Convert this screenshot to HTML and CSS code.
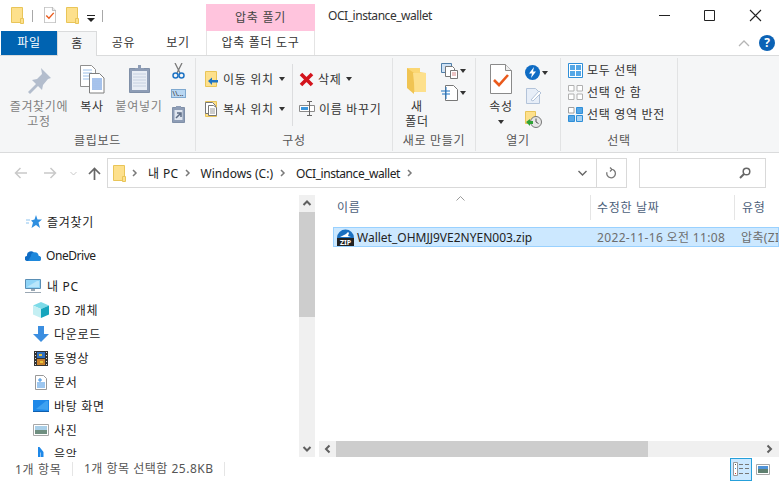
FILE: index.html

```html
<!DOCTYPE html>
<html lang="ko">
<head>
    <meta charset="UTF-8">
    <title>OCI_instance_wallet</title>
    <link rel="stylesheet" href="styles.css">
</head>
<body>
    <svg class="defs" width="0" height="0">
        <symbol id="qfolder" viewBox="0 0 13 17">
            <path d="M.5.5h11v15H.5z" fill="#fde08c" stroke="#e9c558"/>
            <path d="M9.5 11.5h3v5h-3z" fill="#fde08c" stroke="#e9c558"/>
        </symbol>
        <symbol id="check-doc" viewBox="0 0 22 30">
            <path d="M.5.5h15l6 6v23H.5z" fill="#fff" stroke="#8a8a8a"/>
            <path d="M15.500.5v6h6" fill="#eee" stroke="#8a8a8a"/>
            <path d="M4 16l5 5 9-10" fill="none" stroke="#ea5a1c" stroke-width="2.600"/>
        </symbol>
        <symbol id="chev" viewBox="0 0 6 8">
            <path d="M1 1l3 3-3 3" fill="none" stroke="#7a7a7a" stroke-width="1.500"/>
        </symbol>
    </svg>

    <div class="titlebar">
        <div class="qat">
            <svg class="qat-folder" width="13" height="17"><use href="#qfolder"/></svg>
            <span class="qat-sep"></span>
            <svg class="qat-doc" width="12" height="16"><use href="#check-doc"/></svg>
            <svg class="qat-folder2" width="13" height="17"><use href="#qfolder"/></svg>
            <svg class="qat-drop" width="8" height="7" viewBox="0 0 8 7"><path d="M0 0h8v1H0zM0 3h8L4 7z" fill="#222"/></svg>
            <span class="qat-sep qat-sep2"></span>
        </div>
        <div class="context-head">압축 풀기</div>
        <div class="wintitle">OCI_instance_wallet</div>
        <div class="winbtns">
            <svg class="win-min" width="46" height="31" viewBox="0 0 46 31"><path d="M18 15.500h11" stroke="#222"/></svg>
            <svg width="46" height="31" viewBox="0 0 46 31"><path d="M18.500 10.500h10v10h-10z" fill="none" stroke="#222"/></svg>
            <svg width="46" height="31" viewBox="0 0 46 31"><path d="M18 10l11 11M29 10L18 21" stroke="#222" stroke-width="1.100"/></svg>
        </div>
    </div>

    <div class="tabs">
        <div class="tab tab-file">파일</div>
        <div class="tab tab-home">홈</div>
        <div class="tab tab-share">공유</div>
        <div class="tab tab-view">보기</div>
        <div class="tab tab-context">압축 폴더 도구</div>
        <div class="tabs-right">
            <svg width="12" height="7" viewBox="0 0 12 7"><path d="M1 6l5-5 5 5" fill="none" stroke="#b5b5b5" stroke-width="1.300"/></svg>
            <span class="help">?</span>
        </div>
    </div>

    <div class="ribbon">
        <div class="group g1">
            <div class="group-body">
                <div class="big big-pin disabled">
                    <div class="big-icon">
                        <svg width="24" height="30" viewBox="0 0 24 30"><path d="M14 4l10 10-3 1-5 6-1 5-4-4-8 8-2-2 8-8-4-4 5-1 5-5z" fill="#b3bdcd"/></svg>
                    </div>
                    <span>즐겨찾기에<br>고정</span>
                </div>
                <div class="big big-copy">
                    <div class="big-icon">
                        <svg width="25" height="30" viewBox="0 0 25 30">
                            <path d="M.5 1.500h11l4 4v17H.5z" fill="#fff" stroke="#8f8f8f"/>
                            <path d="M3 6h9M3 9h9M3 12h9M3 15h9" stroke="#9cc0ea"/>
                            <path d="M9.500 9.500h10l4.500 4.500v15H9.500z" fill="#fff" stroke="#7f7f7f"/>
                            <path d="M12 15h10M12 17h10M12 19h10M12 21h10M12 23h10M12 25h10" stroke="#4e86d8"/>
                        </svg>
                    </div>
                    <span>복사</span>
                </div>
                <div class="big big-paste disabled">
                    <div class="big-icon">
                        <svg width="21" height="30" viewBox="0 0 21 30">
                            <path d="M.5 4.500h20v24H.5z" fill="#8e9db6" stroke="#8090a8"/>
                            <path d="M3 7h15v19H3z" fill="#e8edf5"/>
                            <path d="M4 10h13M4 13h13M4 16h13M4 19h13M4 22h13" stroke="#c6d0e0"/>
                            <path d="M6 4h9v3H6zM9 1h3v3H9z" fill="#8e9db6"/>
                        </svg>
                    </div>
                    <span>붙여넣기</span>
                </div>
                <div class="small-col">
                    <svg width="13" height="16" viewBox="0 0 13 16">
                        <path d="M3 0l5 10M10 0L5 10" stroke="#7a7a7a" stroke-width="1.300"/>
                        <circle cx="3.500" cy="12.500" r="2.500" fill="none" stroke="#1f74c4" stroke-width="1.500"/>
                        <circle cx="9.500" cy="12.500" r="2.500" fill="none" stroke="#1f74c4" stroke-width="1.500"/>
                    </svg>
                    <span class="pathcopy">\\...</span>
                    <svg class="disabled-ic" width="13" height="17" viewBox="0 0 13 17">
                        <path d="M.5 1.500h12v15H.5z" fill="#8e9db6" stroke="#8090a8"/>
                        <path d="M2.500 4h8v10h-8z" fill="#dfe5ef"/>
                        <path d="M4 12l4-4M5 7h4v4" fill="none" stroke="#5d6c85" stroke-width="1.500"/>
                        <path d="M4 0h5v3H4z" fill="#8e9db6"/>
                    </svg>
                </div>
            </div>
            <div class="group-label">클립보드</div>
        </div>

        <div class="group g2">
            <div class="group-body">
                <div class="organize-col">
                    <div class="org-row">
                        <svg class="ic-folder" width="13" height="16" viewBox="0 0 13 16">
                            <path d="M.5.500h11v15H.5z" fill="#fde08c" stroke="#e9c558"/>
                            <path d="M3 10l4-3.500V9h6v2.500H7V14z" fill="#1f74c4"/>
                        </svg>
                        <span>이동 위치</span><i class="caret"></i>
                    </div>
                    <div class="org-row">
                        <svg class="ic-folder" width="13" height="16" viewBox="0 0 13 16">
                            <path d="M.5.500h11v15H.5z" fill="#fde08c" stroke="#e9c558"/>
                            <path d="M.5 1.500h7l3 3v8H.5z" fill="#fff" stroke="#777"/>
                            <path d="M3.500 4.500h5l3 2v8h-8z" fill="#fff" stroke="#777"/>
                            <path d="M5 8h5M5 10h5M5 12h5" stroke="#9a9a9a"/>
                        </svg>
                        <span>복사 위치</span><i class="caret"></i>
                    </div>
                </div>
                <div class="organize-col org-right">
                    <div class="org-row">
                        <svg class="ic-del" width="15" height="15" viewBox="0 0 15 15"><path d="M2 2l11 11M13 2L2 13" stroke="#d3141c" stroke-width="3.600"/></svg>
                        <span>삭제</span><i class="caret"></i>
                    </div>
                    <div class="org-row">
                        <svg class="ic-ren" width="16" height="16" viewBox="0 0 16 16">
                            <path d="M.5 4.500h15v6H.5z" fill="#fff" stroke="#8a8a8a"/>
                            <path d="M2 6h7v3H2z" fill="#3a96dd"/>
                            <path d="M10.500 0v15M8 .500h5M8 14.500h5" stroke="#666"/>
                        </svg>
                        <span>이름 바꾸기</span>
                    </div>
                </div>
            </div>
            <div class="group-label">구성</div>
        </div>

        <div class="group g3">
            <div class="group-body">
                <div class="big big-new">
                    <div class="big-icon">
                        <svg width="20" height="30" viewBox="0 0 20 30">
                            <path d="M0 4h13v4l6 1v19H7z" fill="#fbd774"/>
                            <path d="M0 4l7 5v21L0 24z" fill="#f0c453"/>
                            <path d="M6 9h13v19H8z" fill="#fde08c"/>
                        </svg>
                    </div>
                    <span>새<br>폴더</span>
                </div>
                <div class="small-col small-new">
                    <div class="small-row">
                        <svg width="17" height="16" viewBox="0 0 17 16">
                            <path d="M.5.500h10v9H.5z" fill="#cfe2f5" stroke="#4f7ea8"/>
                            <path d="M4.500 3.500h7l2 2v8h-9z" fill="#fff" stroke="#777"/>
                            <path d="M9.500 7.500h7v8h-7z" fill="#fff" stroke="#777"/>
                            <path d="M11 10h4M11 12h4" stroke="#d98a8a"/>
                        </svg>
                        <i class="caret"></i>
                    </div>
                    <div class="small-row">
                        <svg width="17" height="16" viewBox="0 0 17 16">
                            <path d="M4.500.500h8l4 4v11h-12z" fill="#fff" stroke="#777"/>
                            <path d="M0 6h9M1 9h8" stroke="#1f74c4" stroke-width="1.200"/>
                            <path d="M5 2v12" stroke="#1f74c4"/>
                        </svg>
                        <i class="caret"></i>
                    </div>
                </div>
            </div>
            <div class="group-label">새로 만들기</div>
        </div>

        <div class="group g4">
            <div class="group-body">
                <div class="big big-prop">
                    <div class="big-icon">
                        <svg width="22" height="30"><use href="#check-doc"/></svg>
                    </div>
                    <span>속성</span>
                    <i class="caret caret-under"></i>
                </div>
                <div class="small-col small-open">
                    <div class="small-row">
                        <svg width="15" height="15" viewBox="0 0 15 15">
                            <circle cx="7.500" cy="7.500" r="7.500" fill="#0f6cc4"/>
                            <path d="M9 2L4 8.500h3L6 13l5-6.500H8z" fill="#fff"/>
                        </svg>
                        <i class="caret"></i>
                    </div>
                    <svg class="open-edit" width="15" height="16" viewBox="0 0 15 16">
                        <path d="M.5.500h9l4 4v11H.5z" fill="#e7eef8" stroke="#b3c3d9"/>
                        <path d="M5 12l8-9 2 2-8 8z" fill="#fff" stroke="#b3c3d9"/>
                    </svg>
                    <svg class="open-recent" width="17" height="17" viewBox="0 0 17 17">
                        <path d="M.5.500h10v12H.5z" fill="#fde08c" stroke="#e9c558"/>
                        <circle cx="11" cy="11" r="5.500" fill="#e6e6e6" stroke="#777"/>
                        <path d="M11 7.500V11l2.500 1.500" fill="none" stroke="#555"/>
                        <path d="M1 11l4-3v2h3v3H5v2z" fill="#2fa336"/>
                    </svg>
                </div>
            </div>
            <div class="group-label">열기</div>
        </div>

        <div class="group g5">
            <div class="group-body select-col">
                <div class="select-row">
                    <svg width="15" height="15" viewBox="0 0 15 15">
                        <path d="M.5.500h14v14H.5z" fill="#fff" stroke="#2f8fd8"/>
                        <path d="M2 2h5v5H2zM8 2h5v5H8zM2 8h5v5H2zM8 8h5v5H8z" fill="#55a7e6"/>
                    </svg>
                    <span>모두 선택</span>
                </div>
                <div class="select-row">
                    <svg width="15" height="15" viewBox="0 0 15 15">
                        <path d="M.5.500h5.500v5.500H.5zM9 .500h5.500v5.500H9zM.5 9h5.500v5.500H.5zM9 9h5.500v5.500H9z" fill="#fff" stroke="#b0b0b0"/>
                    </svg>
                    <span>선택 안 함</span>
                </div>
                <div class="select-row">
                    <svg width="15" height="15" viewBox="0 0 15 15">
                        <path d="M.5.500h5.500v5.500H.5z" fill="#fff" stroke="#a0a0a0"/>
                        <path d="M8.500.500h6v6h-6zM.5 8.500h6v6h-6z" fill="#55a7e6" stroke="#2f8fd8"/>
                        <path d="M8.500 8.500h6v6h-6z" fill="#a8d2f2" stroke="#2f8fd8"/>
                    </svg>
                    <span>선택 영역 반전</span>
                </div>
            </div>
            <div class="group-label">선택</div>
        </div>
    </div>

    <div class="addressbar">
        <div class="navbtns">
            <svg width="13" height="12" viewBox="0 0 13 12"><path d="M13 6H1.500M6.500 1l-5 5 5 5" fill="none" stroke="#c9c9c9" stroke-width="1.500"/></svg>
            <svg class="nav-fwd" width="13" height="12" viewBox="0 0 13 12"><path d="M0 6h11.500M6.500 1l5 5-5 5" fill="none" stroke="#c9c9c9" stroke-width="1.500"/></svg>
            <svg class="nav-down" width="7" height="5" viewBox="0 0 7 5"><path d="M.5 1l3 3 3-3" fill="none" stroke="#c9c9c9"/></svg>
            <svg class="nav-up" width="13" height="13" viewBox="0 0 13 13"><path d="M6.500 13V2M1 7l5.500-5.500L12 7" fill="none" stroke="#666" stroke-width="1.700"/></svg>
        </div>
        <div class="pathbox">
            <svg class="path-folder" width="13" height="17"><use href="#qfolder"/></svg>
            <svg class="crumb-chev" width="6" height="8"><use href="#chev"/></svg>
            <span class="crumb crumb-pc">내 PC</span>
            <svg class="crumb-chev" width="6" height="8"><use href="#chev"/></svg>
            <span class="crumb latin">Windows (C:)</span>
            <svg class="crumb-chev" width="6" height="8"><use href="#chev"/></svg>
            <span class="crumb latin-tight">OCI_instance_wallet</span>
            <svg class="crumb-chev" width="6" height="8"><use href="#chev"/></svg>
            <svg class="path-drop" width="9" height="6" viewBox="0 0 9 6"><path d="M.5 1l4 4 4-4" fill="none" stroke="#666" stroke-width="1.400"/></svg>
            <div class="path-refresh">
                <svg width="11" height="12" viewBox="0 0 11 12"><path d="M5 2.200a4.300 4.300 0 1 1-4 3M4 .5l2 2-2 2" fill="none" stroke="#777" stroke-width="1.300"/></svg>
            </div>
        </div>
        <div class="searchbox">
            <svg width="12" height="12" viewBox="0 0 12 12"><circle cx="7.500" cy="4.500" r="3.300" fill="none" stroke="#666" stroke-width="1.500"/><path d="M5 7l-4 4" stroke="#666" stroke-width="2"/></svg>
        </div>
    </div>

    <div class="main">
        <div class="navpane">
            <div class="nav-item nav-fav">
                <svg width="16" height="14" viewBox="0 0 16 14"><path d="M10 0l1.500 4.500H16l-3.500 3 1.500 5.500-4-3-4.500 3 1.500-5.500-2-2 3.500-1z" fill="#2f8fe0"/><path d="M0 5h4M0 8h3" stroke="#8cc3ef"/></svg>
                <span>즐겨찾기</span>
            </div>
            <div class="nav-item nav-drive">
                <svg width="16" height="11" viewBox="0 0 16 11"><path d="M2.500 11A2.500 2.500 0 0 1 2 6a4 4 0 0 1 7.500-2.500A3.500 3.500 0 0 1 13.500 6 2.500 2.500 0 0 1 13.500 11z" fill="#0f6cc4"/><path d="M6 6a3.500 3.500 0 0 1 7.500 0 2.500 2.500 0 0 1 0 5H3z" fill="#1e88dc"/></svg>
                <span class="latin-tight">OneDrive</span>
            </div>
            <div class="nav-item nav-pc">
                <svg width="16" height="15" viewBox="0 0 16 15"><path d="M.5.500h15v9H.5z" fill="#8fd4f7" stroke="#5a8fb5"/><path d="M2 8l10-6h2v6z" fill="#b9e6fb"/><path d="M6 10h4v2H6z" fill="#9aa7b3"/><path d="M0 13h16v1H0z" fill="#9aa7b3"/></svg>
                <span>내 PC</span>
            </div>
            <div class="nav-item nav-child">
                <svg width="16" height="16" viewBox="0 0 16 16"><path d="M8 0l8 3.500L8 7 0 3.500z" fill="#7ddbe8"/><path d="M0 3.500L8 7v9l-8-3.500z" fill="#c4eff3"/><path d="M16 3.500L8 7v9l8-3.500z" fill="#16a5bd"/></svg>
                <span>3D 개체</span>
            </div>
            <div class="nav-item nav-child">
                <svg width="16" height="16" viewBox="0 0 16 16"><path d="M5 0h6v8h5l-8 8-8-8h5z" fill="#3b8ee0"/></svg>
                <span>다운로드</span>
            </div>
            <div class="nav-item nav-child">
                <svg width="14" height="15" viewBox="0 0 14 15"><path d="M0 0h14v15H0z" fill="#333"/><path d="M3 1h8v6H3z" fill="#2f6fc0"/><path d="M3 8h8v6H3z" fill="#c9822b"/><path d="M5 3h3v2H5zM6 10h3v2H6z" fill="#e8c53a"/><path d="M1 1h1v1H1zM1 4h1v1H1zM1 7h1v1H1zM1 10h1v1H1zM1 13h1v1H1zM12 1h1v1h-1zM12 4h1v1h-1zM12 7h1v1h-1zM12 10h1v1h-1zM12 13h1v1h-1z" fill="#ddd"/></svg>
                <span>동영상</span>
            </div>
            <div class="nav-item nav-child">
                <svg width="12" height="15" viewBox="0 0 12 15"><path d="M.5.500h8l3 3v11H.5z" fill="#fff" stroke="#999"/><path d="M3 5h4M5 3v4M2 8h8M2 10h8M2 12h8" stroke="#3b8ee0"/></svg>
                <span>문서</span>
            </div>
            <div class="nav-item nav-child">
                <svg width="16" height="12" viewBox="0 0 16 12"><path d="M0 0h16v11H0z" fill="#1e88e8"/><path d="M0 11h16v1H0z" fill="#0f5fae"/><path d="M3 9l10-8h2v9z" fill="#3fa2f0"/></svg>
                <span>바탕 화면</span>
            </div>
            <div class="nav-item nav-child">
                <svg width="16" height="12" viewBox="0 0 16 12"><path d="M.5.500h15v11H.5z" fill="#fff" stroke="#a8a8a8"/><path d="M2 2h12v4H2z" fill="#a9cfe8"/><path d="M2 6h12v4H2z" fill="#6f8f80"/></svg>
                <span>사진</span>
            </div>
            <div class="nav-item nav-child">
                <svg width="6" height="16" viewBox="0 0 6 16"><path d="M0 1h1.500l4 5v8H3V7L2.500 6v8H0z" fill="#1e88e8"/></svg>
                <span>음악</span>
            </div>
        </div>
        <div class="vscroll">
            <svg class="sb-btn" width="16" height="17" viewBox="0 0 16 17"><path d="M4.500 10l3.500-3.500 3.500 3.500" fill="none" stroke="#606060" stroke-width="2"/></svg>
            <div class="vthumb"></div>
            <svg class="sb-btn sb-end" width="16" height="17" viewBox="0 0 16 17"><path d="M4.500 7l3.500 3.500L11.500 7" fill="none" stroke="#606060" stroke-width="2"/></svg>
        </div>
        <div class="listpane">
            <div class="listhead">
                <svg class="sortcaret" width="9" height="5" viewBox="0 0 9 5"><path d="M.5 4.500l4-4 4 4" fill="none" stroke="#9a9a9a"/></svg>
                <div class="col col-name">이름</div>
                <div class="col col-date">수정한 날짜</div>
                <div class="col col-type">유형</div>
            </div>
            <div class="filerow">
                <div class="cell cell-name">
                    <svg width="17" height="17" viewBox="0 0 17 17">
                        <path d="M0 9a8.500 8.500 0 0 1 17 0z" fill="#1a6fc0"/>
                        <path d="M3 8l6-3 2-2 1 1-1 3 3 1z" fill="#fff"/>
                        <path d="M0 9h17v8H0z" fill="#222"/>
                        <text x="8.500" y="16" class="ziptext">ZIP</text>
                    </svg>
                    <span class="latin">Wallet_OHMJJ9VE2NYEN003.zip</span>
                </div>
                <div class="cell cell-date">2022-11-16 오전 11:08</div>
                <div class="cell cell-type">압축(ZIP) 파일</div>
            </div>
            <div class="hscroll">
                <svg class="sb-btn" width="17" height="16" viewBox="0 0 17 16"><path d="M10.500 4.500L7 8l3.500 3.500" fill="none" stroke="#606060" stroke-width="2"/></svg>
                <div class="hthumb"></div>
                <svg class="sb-btn sb-right" width="17" height="16" viewBox="0 0 17 16"><path d="M6.500 4.500L10 8l-3.500 3.500" fill="none" stroke="#606060" stroke-width="2"/></svg>
            </div>
        </div>
    </div>

    <div class="statusbar">
        <span class="status-a">1개 항목</span>
        <span class="status-b">1개 항목 선택함 25.8KB</span>
        <div class="viewbtns">
            <div class="viewbtn active">
                <svg width="16" height="14" viewBox="0 0 16 14">
                    <path d="M.5.500h4v13h-4z" fill="#fff" stroke="#999"/>
                    <path d="M2 2h1v1H2z" fill="#555"/><path d="M2 6h1v1H2z" fill="#2f8fd8"/><path d="M2 11h1v1H2z" fill="#d8352f"/>
                    <path d="M6 2.500h4M12 2.500h4M6 6.500h4M12 6.500h4M6 11.500h4M12 11.500h4" stroke="#777"/>
                </svg>
            </div>
            <svg class="view-large" width="14" height="11" viewBox="0 0 14 11">
                <path d="M.5.500h13v10H.5z" fill="#fff" stroke="#a8a8a8"/>
                <path d="M2 2h10v3H2z" fill="#4f93d8"/><path d="M2 5h10v4H2z" fill="#5f8070"/>
            </svg>
        </div>
    </div>
</body>
</html>
```

FILE: styles.css

```css
* { box-sizing: border-box; }
html, body { margin: 0; height: 481px; overflow: hidden; }
body { font-family: "Noto Sans", "Noto Sans CJK KR", sans-serif; font-size: 12px; letter-spacing: .7px; color: #222; background: #fff; }
svg { display: block; flex: none; }
.defs { position: absolute; }
.latin { letter-spacing: 0; }
.latin-tight { letter-spacing: -.45px; }

/* title bar */
.titlebar { display: flex; height: 31px; }
.qat { display: flex; align-items: flex-start; width: 206px; padding: 7px 0 0 11px; }
.qat-sep { width: 1px; height: 12px; background: #a8a8a8; margin: 3px 0 0 8px; }
.qat-doc { margin-left: 11px; }
.qat-folder2 { margin-left: 10px; }
.qat-drop { margin: 8px 0 0 8px; }
.qat-sep2 { margin-left: 7px; }
.context-head { width: 109px; height: 27px; margin-top: 4px; background: #ffc4dd; text-align: center; line-height: 28px; color: #444; }
.wintitle { margin-left: 13px; line-height: 31px; color: #333; letter-spacing: -.45px; }
.winbtns { display: flex; margin-left: auto; margin-right: 1px; }
.win-min { margin-right: -1px; }

/* tabs */
.tabs { display: flex; height: 25px; border-bottom: 1px solid #dadbdc; }
.tab { height: 24px; line-height: 24px; text-align: center; color: #333; }
.tab-file { width: 56px; margin-left: 1px; background: #0063b1; color: #fff; }
.tab-home { width: 40px; height: 25px; background: #f5f6f7; border: 1px solid #dadbdc; border-bottom: 0; }
.tab-share { width: 53px; }
.tab-view { width: 56px; }
.tab-context { width: 109px; border-left: 1px solid #e4e4e4; border-right: 1px solid #e4e4e4; }
.tabs-right { display: flex; align-items: center; margin-left: auto; padding-right: 4px; gap: 9px; }
.help { width: 16px; height: 16px; border-radius: 50%; background: #0b62b5; color: #fff; font-weight: 700; font-size: 12px; letter-spacing: 0; line-height: 16px; text-align: center; }

/* ribbon */
.ribbon { display: flex; height: 97px; background: #f5f6f7; border-bottom: 1px solid #dadbdc; color: #333; }
.group { display: flex; flex-direction: column; height: 93px; margin-top: 2px; border-right: 1px solid #e2e3e4; }
.group-body { display: flex; height: 76px; margin-top: -2px; }
.group-label { height: 20px; line-height: 20px; text-align: center; color: #555; }
.g1 { width: 196px; }
.g2 { width: 197px; }
.g3 { width: 83px; }
.g4 { width: 85px; }
.g5 { width: 117px; }
.disabled { color: #808080; }
.big { display: flex; flex-direction: column; align-items: center; text-align: center; line-height: 15px; }
.big-icon { height: 43px; padding-top: 8px; }
.big-pin { width: 70px; margin-left: 4px; }
.big-copy { width: 36px; }
.big-paste { width: 58px; }
.big-new { width: 48px; }
.big-prop { width: 48px; margin-left: 1px; }
.small-col { display: flex; flex-direction: column; align-items: center; width: 20px; padding-top: 7px; }
.pathcopy { width: 15px; height: 9px; margin: 10px 0 8px; background: #b9d7f2; border: 1px solid #7fa9d0; font-size: 7px; letter-spacing: 0; line-height: 7px; text-align: center; overflow: hidden; }
.caret { display: block; flex: none; width: 0; height: 0; border: 3.5px solid transparent; border-top: 4px solid #333; border-bottom: 0; }
.caret-under { margin-top: 6px; }

.organize-col { padding: 8px 0 0 9px; width: 96px; }
.org-row { display: flex; align-items: center; height: 30px; }
.org-row .caret { margin-left: 5px; }
.ic-folder { margin-right: 5px; }
.org-right { width: 100px; height: 62px; margin-top: 8px; padding: 0 0 0 6px; border-left: 1px solid #dcdddf; }
.ic-del { margin-right: 4px; }
.ic-ren { margin-right: 4px; }

.small-row { display: flex; align-items: center; gap: 2px; }
.small-new { align-items: flex-start; width: 32px; }
.small-new .small-row + .small-row { margin-top: 6px; }
.small-open { align-items: flex-start; width: 32px; padding-top: 9px; }
.open-edit { margin: 8px 0 0 1px; }
.open-recent { margin-top: 7px; }

.select-col { flex-direction: column; padding: 3px 0 0 7px; }
.select-row { display: flex; align-items: center; gap: 4px; height: 22px; }

/* address bar */
.addressbar { display: flex; height: 30px; margin-top: 5px; }
.navbtns { display: flex; align-items: center; width: 107px; padding-left: 14px; }
.nav-fwd { margin-left: 17px; }
.nav-down { margin-left: 13px; }
.nav-up { margin-left: 11px; }
.pathbox { display: flex; align-items: center; width: 520px; height: 30px; padding-left: 5px; border: 1px solid #d9d9d9; }
.path-folder { margin-right: 5px; }
.crumb { margin: 0 6px 0 10px; }
.crumb-pc { margin-right: 5px; letter-spacing: .4px; }
.crumb-chev { margin-left: 1px; }
.path-drop { margin-left: auto; margin-right: 9px; }
.path-refresh { display: flex; align-items: center; justify-content: center; width: 30px; height: 28px; border-left: 1px solid #d9d9d9; }
.searchbox { display: flex; align-items: center; justify-content: flex-end; width: 127px; height: 30px; margin-left: 12px; padding-right: 14px; border: 1px solid #d9d9d9; }

/* main panes */
.main { display: flex; height: 262px; margin-top: 7px; }
.navpane { width: 299px; padding-top: 15px; overflow: hidden; }
.nav-item { display: flex; align-items: center; height: 24px; gap: 5px; }
.nav-fav { padding-left: 26px; }
.nav-drive { padding-left: 25px; margin-top: 9px; }
.nav-pc { padding-left: 25px; margin-top: 7px; gap: 6px; }
.nav-child { display: grid; grid-template-columns: 16px auto; justify-content: start; padding-left: 33px; }
.nav-child svg { justify-self: center; }

.vscroll { display: flex; flex-direction: column; width: 16px; background: #f0f0f0; }
.vthumb { height: 105px; background: #cdcdcd; }
.sb-end { margin-top: auto; }

.listpane { display: flex; flex-direction: column; flex: 1; min-width: 0; margin-left: 4px; }
.listhead { position: relative; display: flex; height: 25px; color: #4c607a; }
.sortcaret { position: absolute; left: 137px; top: 1px; }
.col { line-height: 25px; border-right: 1px solid #e5e5e5; }
.col-name { width: 272px; padding-left: 18px; }
.col-date { width: 144px; padding-left: 6px; }
.col-type { flex: 1; padding-left: 7px; border-right: 0; }
.filerow { display: flex; align-items: center; height: 20px; margin: 7px 0 0 14px; background: #cce8ff; border: 1px solid #99d1ff; }
.cell { white-space: nowrap; overflow: hidden; }
.cell-name { display: flex; align-items: center; gap: 3px; width: 258px; padding-left: 3px; color: #222; }
.cell-date { width: 144px; padding-left: 5px; color: #6d6d6d; letter-spacing: .35px; }
.cell-type { flex: 1; padding-left: 5px; color: #6d6d6d; letter-spacing: .35px; }
.ziptext { font-size: 7px; font-weight: 700; letter-spacing: 0; fill: #fff; text-anchor: middle; }
.hscroll { display: flex; height: 16px; margin-top: auto; background: #f0f0f0; }
.hthumb { width: 312px; background: #cdcdcd; }
.sb-right { margin-left: auto; margin-right: 1px; }

/* status bar */
.statusbar { display: flex; align-items: center; height: 24px; color: #555; }
.status-a { margin-left: 15px; width: 57px; }
.status-b { padding: 0 10px 0 11px; border-left: 1px solid #e5e5e5; border-right: 1px solid #e5e5e5; line-height: 14px; letter-spacing: .5px; }
.viewbtns { display: flex; align-items: center; margin-left: auto; margin-right: 9px; gap: 4px; }
.viewbtn { display: flex; align-items: center; justify-content: center; width: 22px; height: 23px; }
.viewbtn.active { background: #cce8ff; border: 1px solid #26a0da; }
```
